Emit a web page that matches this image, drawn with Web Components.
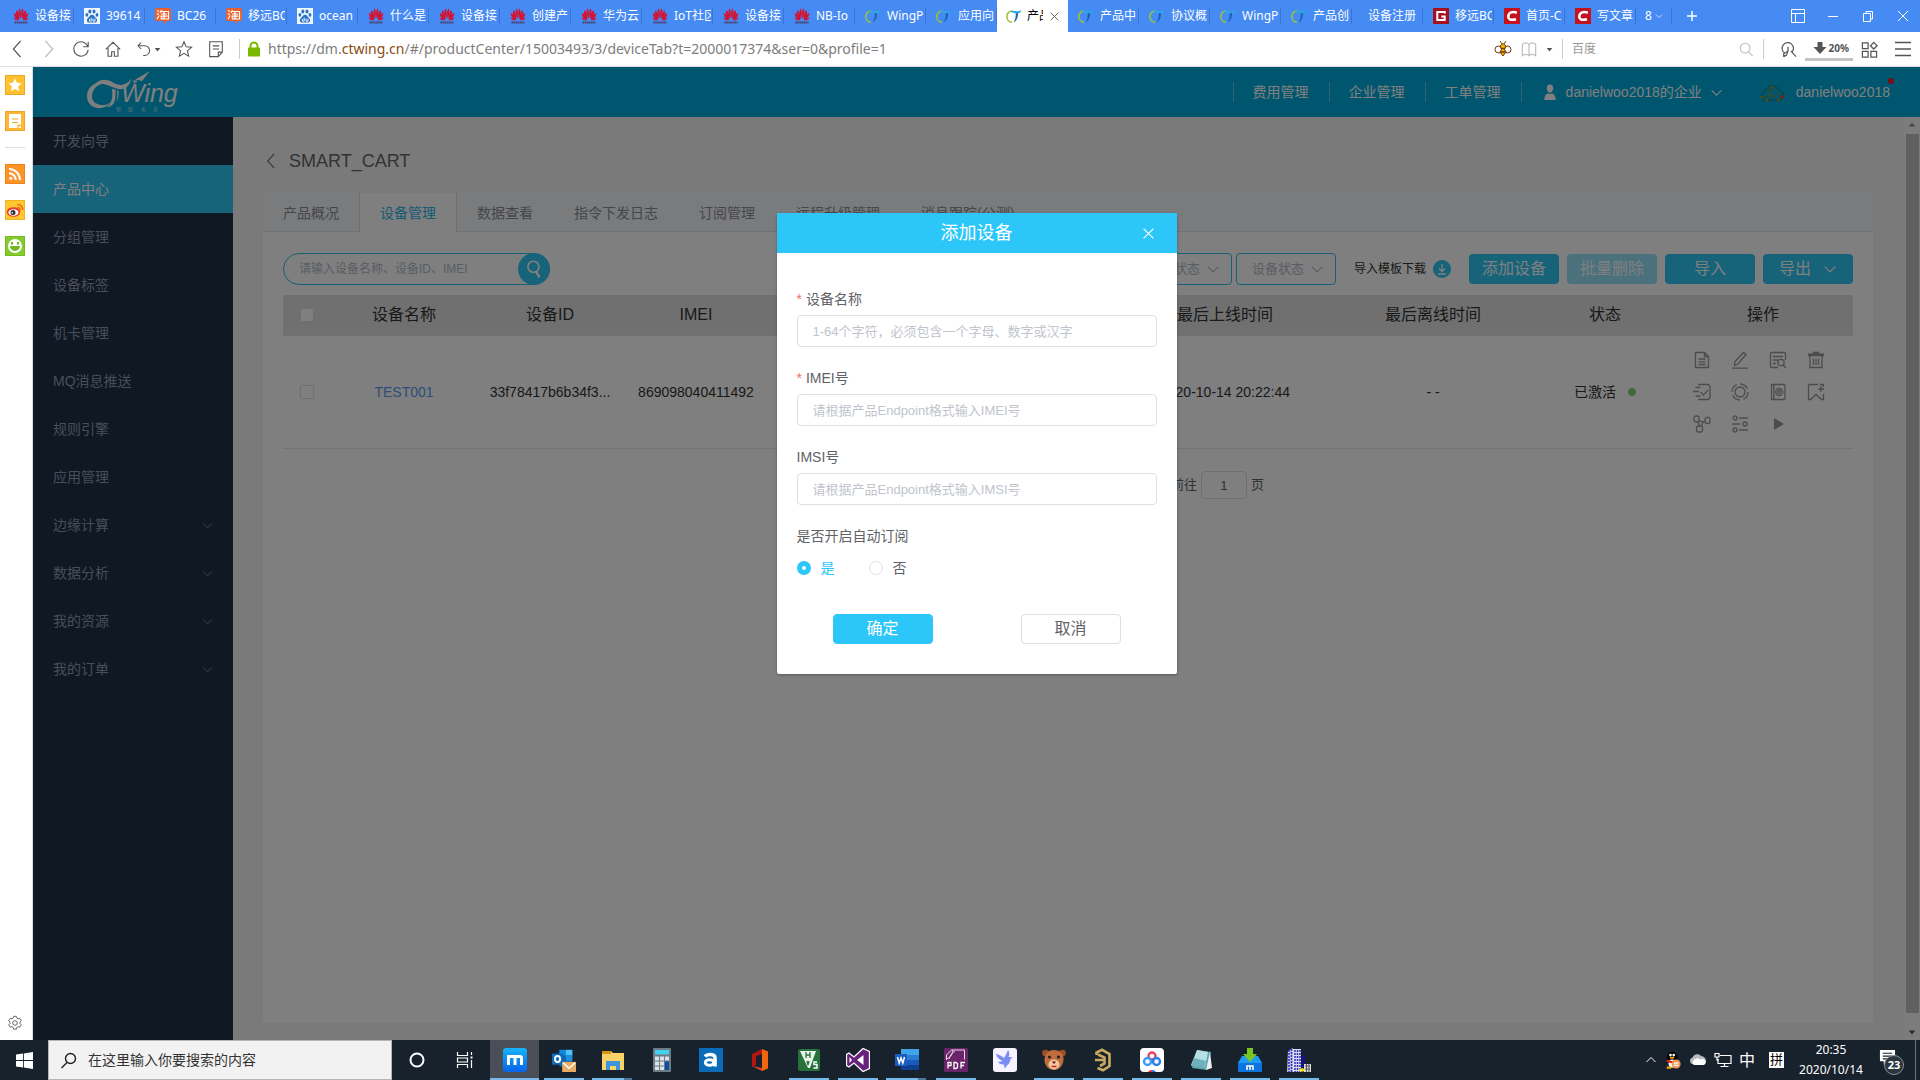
<!DOCTYPE html>
<html lang="zh-CN">
<head>
<meta charset="utf-8">
<title>CTWing - 设备管理</title>
<style>
    html, body {
        height: 100%;
        margin: 0;
    }

    body {
        display: flex;
        flex-direction: column;
        overflow: hidden;
        background: #fff;
        font-family: "Liberation Sans", "Noto Sans CJK SC", sans-serif;
        font-size: 14px;
        line-height: 20px;
        --brand: #2dc6f9;
        --ui-font: "Noto Sans", "Noto Sans CJK SC", sans-serif;
    }
</style>
</head>
<body>
<browser-tabs></browser-tabs>
<browser-toolbar></browser-toolbar>
<browser-body>
    <side-strip slot="strip"></side-strip>
    <site-header></site-header>
    <site-layout>
        <side-nav slot="nav"></side-nav>
        <device-page></device-page>
    </site-layout>
    <modal-dialog slot="overlay" heading="添加设备">
        <device-form></device-form>
    </modal-dialog>
</browser-body>
<task-bar></task-bar>

<script>
const line = (body, box = 24, width = 1) =>
    `<svg viewBox="0 0 ${box} ${box}" fill="none" stroke="currentColor" stroke-width="${width}">${body}</svg>`;

const ICONS = {
    // tab favicons
    huawei: `<svg viewBox="0 0 16 16"><g fill="#d7102c"><path d="M7.600 10.500C5.600 7 5 3 6.200.6 8 1.500 8 6 7.600 10.500zM8.400 10.500C10.400 7 11 3 9.800.6 8 1.500 8 6 8.400 10.500z"/><path d="M6.800 10.700C3.800 8.500 2.200 5.500 3.300 2.200 5.300 3.400 6.500 7 6.800 10.700zM9.200 10.700C12.200 8.500 13.800 5.500 12.700 2.200 10.700 3.400 9.500 7 9.200 10.700z"/><path d="M6.400 11.300C3 10.800.8 8.500.8 5 3.400 5.800 5.600 8.500 6.400 11.300zM9.600 11.300C13 10.800 15.200 8.500 15.200 5 12.600 5.800 10.400 8.500 9.600 11.300z"/><path d="M6.300 11.900C3.500 13 1.500 11.700.5 9.400c2.300.1 4.500 1 5.800 2.500zM9.700 11.900c2.800 1.100 4.800-.2 5.800-2.500-2.300.1-4.500 1-5.800 2.500z"/></g><path d="M1.500 14.500h13" stroke="#4a3355" stroke-width="2" stroke-dasharray="1.300 .7"/></svg>`,
    baidu: `<svg viewBox="0 0 16 16"><rect width="16" height="16" fill="#eef5fb"/><g fill="#2a72c8"><ellipse cx="5.800" cy="3.600" rx="1.500" ry="2"/><ellipse cx="10" cy="3.600" rx="1.500" ry="2"/><ellipse cx="2.900" cy="6.800" rx="1.400" ry="1.900"/><ellipse cx="13" cy="6.800" rx="1.400" ry="1.900"/><path d="M8 6.700c2 0 2.500 2 4 3.200 2 1.800 1 4.600-1 4.600H5c-2 0-3-2.800-1-4.600C5.500 8.700 6 6.700 8 6.700z"/></g><path d="M5.500 11v2.200h1.700V9.700M9 10.500v2.700h2v-2.700" fill="none" stroke="#fff" stroke-width=".9"/></svg>`,
    taobao: `<svg viewBox="0 0 16 16"><path d="M2 0h12a2 2 0 0 1 2 2v9a2 2 0 0 1-2 2h-2l-2.500 3L9 13H2a2 2 0 0 1-2-2V2a2 2 0 0 1 2-2z" fill="#e9602b"/><path d="M2 2.500l2 1M1.800 5.500l2 1M2 11l2.200-3.500M6.500 2L5 5M6 3.500h7.500V11H11M6 6h6M5.500 8.200h7M9 4v6.500M6.300 8.500v2.300h5" fill="none" stroke="#fff" stroke-width="1.200"/></svg>`,
    ctwing: `<svg viewBox="0 0 16 16" fill="none"><path d="M6.500 3C3 3 .8 5.500.8 8.500S3 14 6 14.200" stroke="#9ac43c" stroke-width="1.600"/><path d="M4 3.800C7 1.300 9 4.600 15.600 2.200 14.500 5 12.500 5.600 10.500 5.500 8.500 5 6.500 4.500 4 3.800z" fill="#2ba9e6"/><path d="M12 5.300C12 9 11 13 7.500 14.500 9.500 11.500 9.800 8.500 9.800 5z" fill="#1c62ae"/></svg>`,
    gsite: `<svg viewBox="0 0 16 16"><rect width="16" height="16" fill="#a50f1e"/><path d="M11.800 5.500V4H4.300v8h7.400V8.500H8.300" fill="none" stroke="#fff" stroke-width="2"/></svg>`,
    csdn: `<svg viewBox="0 0 16 16"><rect width="16" height="16" fill="#c5121f"/><path d="M12.800 4.700C8.500 3.300 4.800 4.300 4.300 8c-.4 3.700 3 4.500 7.700 3.300" fill="none" stroke="#fff" stroke-width="2.500"/></svg>`,

    // generic strokes
    close: line('<path d="M5 5l14 14M19 5L5 19"/>', 24, 1.600),
    down: line('<path d="M3 8l9 9 9-9"/>', 24, 2),
    up: line('<path d="M3 16l9-9 9 9"/>', 24, 2),
    plus: line('<path d="M12 2v20M2 12h20"/>', 24, 3),
    layout: line('<path d="M1.500 1.500h13v13h-13zM1.500 5.500h13M5.500 5.500v9"/>', 16),
    minimise: line('<path d="M3 8.500h10"/>', 16),
    restore: line('<path d="M3.500 5.500h7v8h-7zM6 5V3.500h6.500V11H11"/>', 16),
    shut: line('<path d="M3 3l10 10M13 3L3 13"/>', 16),
    back: line('<path d="M14 1L6 10l8 9"/>', 20, 1.400),
    forward: line('<path d="M6 1l8 9-8 9"/>', 20, 1.400),
    reload: line('<path d="M17.500 7A8 8 0 1 0 18 11M18 2v5.500h-5.500"/>', 20, 1.200),
    home: line('<path d="M2 10.500L10 2.500l8 8M4.500 9v9h4v-5h3v5h4V9"/>', 20, 1.200),
    undo: line('<path d="M6.500 2L2.500 6l4 4M3 6h8a5.500 5.500 0 0 1 0 12H9"/>', 20, 1.300),
    star: line('<path d="M10 2l2.400 5.600 6 .5-4.600 4 1.400 5.900L10 14.800 4.800 18l1.400-5.900-4.600-4 6-.5z"/>', 20, 1.200),
    note: line('<path d="M3 2h14v11.500L12.500 18.500H3zM6.500 6.500h7M6.500 10h7M12.500 18v-4.500H17"/>', 20, 1.200),
    caret: `<svg viewBox="0 0 10 10"><path d="M1 3h8L5 8z" fill="currentColor"/></svg>`,
    triUp: `<svg viewBox="0 0 10 10"><path d="M1 7h8L5 2z" fill="currentColor"/></svg>`,
    lock: `<svg viewBox="0 0 16 16"><path d="M4.500 8V5a3.500 3.500 0 0 1 7 0v3" fill="none" stroke="#7ab800" stroke-width="2"/><rect x="2" y="6.500" width="12" height="9" rx="1" fill="#7ab800"/></svg>`,
    bee: `<svg viewBox="0 0 18 18" stroke="#6b3a0c"><path d="M6 1l2 3M12 1l-2 3" fill="none"/><circle cx="4.500" cy="9.500" r="3.500" fill="#fff"/><circle cx="13.500" cy="9.500" r="3.500" fill="#fff"/><path d="M9 3.500l3 2.500-1.500 3.500L12 12l-3 4-3-4 1.500-2.500L6 6z" fill="#f7b500"/><path d="M7 8.500h4M6.500 12h5" stroke-width="1.500"/></svg>`,
    book: line('<path d="M9 4C7 1.500 3.500 1.500 1.500 4v12.500c2-2 5.500-2 7.500 0 2-2 5.500-2 7.500 0V4C14.500 1.500 11 1.500 9 4zM9 4v12"/>', 18, 1.300),
    search: line('<circle cx="8" cy="8" r="5.500"/><path d="M12 12.200l4.500 4.800"/>', 18, 1.200),
    findPage: line('<path d="M5.500 13.500A6 6 0 1 1 14 12.500M12.500 11.500L18 17.500M9.500 7v4.500L5 14.500V18M9.500 11.500L8 16l-3 1.500"/>', 19, 1.300),
    download: `<svg viewBox="0 0 14 14"><path d="M4.500 1h5v5h4L7 13 .5 6h4z" fill="#555"/></svg>`,
    apps: line('<path d="M1.500 2h6v6h-6zM1.500 11h6v6h-6zM10.500 11h6v6h-6zM13.500 1.500L17 5l-3.500 3.500L10 5z"/>', 18, 1.300),
    menu: line('<path d="M1 2.500h16M1 9h16M1 15.500h16"/>', 18, 1.300),

    // left strip
    stripStar: `<svg viewBox="0 0 20 20"><rect x=".5" y=".5" width="19" height="19" fill="#ffc12f" stroke="#eda71d"/><path d="M10 3.500l2 4.300 4.500.5-3.300 3.200.9 4.700-4.100-2.300-4.100 2.300.9-4.700L3.500 8.300l4.500-.5z" fill="#fff"/></svg>`,
    stripNote: `<svg viewBox="0 0 20 20"><rect x=".5" y=".5" width="19" height="19" fill="#ffb632" stroke="#eda02a"/><path d="M4 3h12v10.500h-3.500V17H4z" fill="#fff"/><path d="M16 14.500V17h-3z" fill="#fff"/><path d="M7 8h6M7 11.500h6" stroke="#f5a623" stroke-width="1.200"/></svg>`,
    rss: `<svg viewBox="0 0 20 20"><rect x=".5" y=".5" width="19" height="19" fill="#ff9326" stroke="#ee8420"/><circle cx="5.800" cy="14.300" r="1.600" fill="#fff"/><path d="M4 9.200a6.800 6.800 0 0 1 6.800 6.800M4 5a11 11 0 0 1 11 11" fill="none" stroke="#fff" stroke-width="2"/></svg>`,
    weibo: `<svg viewBox="0 0 20 20"><rect x=".5" y=".5" width="19" height="19" fill="#ffc62f" stroke="#efb327"/><ellipse cx="8.500" cy="12" rx="6.800" ry="4.800" fill="#e6402a"/><ellipse cx="8.500" cy="12.500" rx="5" ry="3.300" fill="#fff"/><circle cx="8" cy="12.500" r="2.500" fill="#333"/><circle cx="7.300" cy="12.800" r=".8" fill="#fff"/><path d="M12.500 7.500a2.500 2.500 0 0 1 2.800 2.800M12.500 4.500a5 5 0 0 1 5.200 5.500" fill="none" stroke="#f0641e" stroke-width="1.400"/></svg>`,
    smile: `<svg viewBox="0 0 20 20"><rect x=".5" y=".5" width="19" height="19" fill="#83cc2b" stroke="#76bb22"/><circle cx="10" cy="10" r="7" fill="#fff"/><path d="M5 10h10a5 5 0 0 1-10 0z" fill="#6fb81f"/><path d="M7 6v2.500M13 6v2.500" stroke="#6fb81f" stroke-width="2"/></svg>`,
    gear: line('<circle cx="9" cy="9" r="2.600"/><path d="M7.500 1.500h3l.6 2 1.400.8 2-.6 1.600 2.600-1.400 1.500v1.800l1.400 1.500-1.600 2.600-2-.6-1.400.8-.6 2h-3l-.6-2-1.400-.8-2 .6-1.600-2.600 1.400-1.500V7.800L1.900 6.300l1.600-2.600 2 .6 1.400-.8z"/>', 18, 1.100),

    // site
    user: `<svg viewBox="0 0 16 20"><path d="M8 0.500c2.600 0 4 2 4 4.600S10.500 11 8 11 4 7.700 4 5.100 5.400.5 8 .5zM.8 20c0-4.500 1.700-6.800 4.700-8.300 1.500 1.200 3.500 1.200 5 0 3 1.500 4.700 3.800 4.700 8.300z" fill="currentColor"/></svg>`,
    network: `<svg viewBox="0 0 26 20" fill="none"><path d="M5 18a5 5 0 0 1 1-9C8 2 17 1 20 7a6 6 0 0 1 2 11z" stroke="#0f8f9c" stroke-width="1.500"/><path d="M3 15l9-2 1-9 6 7 5 3M12 13l-4 5M13 13l7 5M13 5L7 9" stroke="#6d8a3c"/><g fill="#a89a2c"><circle cx="3" cy="15" r="1.400"/><circle cx="12" cy="13" r="1.400"/><circle cx="13" cy="4" r="1.400"/><circle cx="20" cy="18" r="1.400"/><circle cx="8" cy="18" r="1.400"/></g><circle cx="24" cy="14.500" r="2" fill="#e8442e"/></svg>`,
    find: line('<circle cx="8.500" cy="7" r="5"/><path d="M11 11.500l3 5" stroke-width="2.200"/>', 18, 1.500),
    saveDown: line('<path d="M9 4v7M6 8.500l3 3 3-3M5 14h8"/>', 18, 1.300),
    doc: line('<path d="M2.500 1.500h9l4 4v11h-13zM11.500 1.500v4h4M5.500 8h7M5.500 10.800h7M5.500 13.500h7"/>', 18, 1.300),
    edit: line('<path d="M4 10.500L12.500 1.500l2.500 2L7 13l-3.500 1.500zM1 17.200h16"/>', 18, 1.300),
    docFind: line('<path d="M16.500 9V2.500a1 1 0 0 0-1-1h-13a1 1 0 0 0-1 1v13a1 1 0 0 0 1 1H9M4 5.500h10M4 9h5M4 12.500h3"/><circle cx="12" cy="11.500" r="3.200"/><path d="M14.200 14l2.800 3"/>', 18, 1.300),
    trash: line('<path d="M1 4.500h16M2 4V3h14v1M6.500 3V1.500h5V3M3 5v11.500h12V5M6.500 7.500v6.500M9 7.500v6.500M11.500 7.500v6.500"/>', 18, 1.300),
    docCheck: line('<path d="M5 1.500h10.500l1.500 2v11l-1.500 2H5M2.500 4.500h5M0 8.500h6M2.500 13h5M7.500 9l3 3 4.500-5"/>', 18, 1.300),
    ring: line('<circle cx="9" cy="9" r="5"/><circle cx="9" cy="9" r="8" stroke-dasharray="9 3.570"/>', 18, 1.300),
    cert: line('<path d="M2.500 1.500h12a1.500 1.500 0 0 1 1.500 1.500v12a1.500 1.500 0 0 1-1.500 1.500h-12zM4.800 1.500v15"/><circle cx="10.200" cy="9" r="3.500"/><circle cx="10.200" cy="9" r="1.500"/>', 18, 1.300),
    mark: line('<path d="M11 1.500H2.500a1 1 0 0 0-1 1v14h2l5.500-5 5.500 5h2V11M14 3v6M11 6h6M16.500 4V1.500H13"/>', 18, 1.300),
    nodes: line('<rect x="1" y="1" width="5" height="6" rx="2"/><rect x="12" y="2.500" width="5" height="6" rx="2"/><rect x="3.500" y="11" width="6" height="6" rx="2"/><path d="M5 7l1.500 4M6 5c1 2 4 2 6 1.500M8.500 11.500L10 7"/>', 18, 1.300),
    sliders: line('<circle cx="4" cy="3" r="2"/><circle cx="14" cy="9" r="2"/><circle cx="4" cy="15" r="2"/><path d="M8 3h9M1 9h8M8 15h9"/>', 18, 1.300),
    play: `<svg viewBox="0 0 18 18"><path d="M5 3l10 6-10 6z" fill="currentColor"/></svg>`,

    // task bar
    windows: `<svg viewBox="0 0 16 16" fill="#fff"><path d="M0 2.300L6.600 1.400v6.200H0zM7.400 1.300L16 0v7.600H7.400zM0 8.400h6.600v6.200L0 13.700zM7.400 8.400H16V16l-8.600-1.300z"/></svg>`,
    taskSearch: line('<circle cx="10.500" cy="6.500" r="5"/><path d="M7 10.500L1.500 16"/>', 17, 1.400),
    cortana: `<svg viewBox="0 0 24 24"><circle cx="12" cy="12" r="6.500" fill="none" stroke="#fff" stroke-width="2"/></svg>`,
    taskView: `<svg viewBox="0 0 24 24" fill="none" stroke="#fff" stroke-width="1.200"><path d="M3.500 4v3.500h10V4M3.500 20v-3.500h10V20M3.500 10h10v4h-10zM17.500 4v3M17.500 12v8"/><path d="M16.500 9.500h2" stroke-width="2"/></svg>`,
    maxthon: `<svg viewBox="0 0 24 24"><defs><linearGradient id="m" y2="1" x2="0"><stop stop-color="#16b4ff"/><stop offset="1" stop-color="#0763e8"/></linearGradient></defs><rect width="24" height="24" rx="3" fill="url(#m)"/><path d="M5.500 17V8.500H17a1.500 1.500 0 0 1 1.500 1.500v7M12 9v8" fill="none" stroke="#fff" stroke-width="3"/></svg>`,
    outlook: `<svg viewBox="0 0 26 26"><path d="M8 2h14v18H8z" fill="#0a64b4"/><path d="M8 2h7v6H8z" fill="#1487d8"/><path d="M15 2h7v6h-7z" fill="#4fc3f7"/><path d="M15 8h7v6h-7z" fill="#1c8fe0"/><rect y="6" width="12" height="12" fill="#0f6cbd"/><ellipse cx="6" cy="12" rx="2.800" ry="3.300" fill="none" stroke="#fff" stroke-width="2"/><path d="M11 15h15v11H11z" fill="#e8ab63"/><path d="M12 16l6.500 6L25 16" fill="none" stroke="#fff" stroke-width="1.500"/></svg>`,
    explorer: `<svg viewBox="0 0 24 24"><path d="M1 3h9l2 2h11v17H1z" fill="#fbd267"/><path d="M1 3h9v3H1z" fill="#d9930d"/><path d="M5 22v-9h14v9h-4v-4H9v4z" fill="#3c96dc"/></svg>`,
    calc: `<svg viewBox="0 0 24 24"><rect x="3" width="18" height="24" rx="1" fill="#6e7b85"/><rect x="5" y="2" width="14" height="4.500" fill="#45d0f0"/><g fill="#dbe2e8"><path d="M5 8.500h4v4H5zM10 8.500h4v4h-4zM5 13.500h4v4H5zM10 13.500h4v4h-4zM5 18.500h4v3.500H5zM10 18.500h4v3.500h-4zM15 8.500h4v4h-4z"/></g><path d="M15 13.500h4V22h-4z" fill="#0b4f9c"/></svg>`,
    alpha: `<svg viewBox="0 0 24 24"><rect width="24" height="24" fill="#0a6cb8"/><path d="M6 8.500C8 6 16 5 16 10v8.500" fill="none" stroke="#fff" stroke-width="3.600"/><ellipse cx="10.500" cy="14.500" rx="4.200" ry="2.800" fill="none" stroke="#fff" stroke-width="3"/></svg>`,
    office: `<svg viewBox="0 0 24 24"><path d="M4 6l10-5v5L8 8v9l-4 2z" fill="#b3160f"/><path d="M14 1l6 2.500v17L14 23z" fill="#f2660f"/><path d="M4 18l10 2v3z" fill="#ea3e23"/></svg>`,
    green: `<svg viewBox="0 0 24 24"><rect x="1" y="1" width="22" height="22" rx="2" fill="#27713a"/><path d="M3 3h16l-6 17h-2z" fill="#eaf4ea"/><path d="M9 4v6M13 4v6M9 7h4M10 13l1 4 1-4" stroke="#27713a" fill="none" stroke-width="1.300"/><path d="M20 14h-3v2.500h3V20h-3.500" stroke="#fff" stroke-width="1.500" fill="none"/></svg>`,
    vs: `<svg viewBox="0 0 24 24"><path d="M17 .5l6.500 3v17l-6.500 3L8 15l-5 4-2.500-1.500v-11L3 5l5 4z" fill="#68217a" stroke="#fff" stroke-width="1.300"/><path d="M17.500 7v10L11 12zM3.500 9v6L6 12z" fill="#fff"/></svg>`,
    word: `<svg viewBox="0 0 24 24"><path d="M6 1h18v6H6z" fill="#41a5ee"/><path d="M6 7h18v5H6z" fill="#2b7cd3"/><path d="M6 12h18v5H6z" fill="#185abd"/><path d="M6 17h18v5H6z" fill="#103f91"/><rect y="6" width="12" height="12" fill="#1a5dbe"/><path d="M2.500 9l1.700 6L6 10l1.800 5 1.700-6" fill="none" stroke="#fff" stroke-width="1.500"/></svg>`,
    pdf: `<svg viewBox="0 0 24 24"><rect width="24" height="24" rx="1.500" fill="#6a2468"/><path d="M2.500 12V7l5-5h13v9.500M2.500 11c5-2 6-5 6-9M5 11c1-4 4-7 6-8" fill="none" stroke="#eadcea"/><path d="M4 20.500v-6h3v3H4M10 14.500v6h2l1.500-1v-4l-1.500-1zM17 20.500v-6h4M17 17.500h3" fill="none" stroke="#fff" stroke-width="1.300"/></svg>`,
    bird: `<svg viewBox="0 0 24 24"><rect width="24" height="24" rx="3" fill="#f4f3ff"/><path d="M3 6c4 1 6 2 8 4 2-3 3-6 4-8 2 3 1.500 5 .5 7l5 .5c-3 .5-3 2-3.500 4-1 3-4 4-5 7-1-2-1-3-1-4-4 0-5-1-6-3 3 .5 4 0 4-1C5 11 4 9 3 6z" fill="#7b8df0"/></svg>`,
    bear: `<svg viewBox="0 0 24 24"><circle cx="3.500" cy="5" r="3.300" fill="#a04e22"/><circle cx="20.500" cy="5" r="3.300" fill="#a04e22"/><path d="M12 2c6 0 10 4 9.500 10S17 22 12 22 2.500 18 2.500 12 6 2 12 2z" fill="#c06c3c"/><ellipse cx="12" cy="16.500" rx="5.500" ry="5" fill="#f1c69c"/><circle cx="7.500" cy="9" r="1.600" fill="#222"/><circle cx="16.500" cy="9" r="1.600" fill="#222"/><path d="M10 13.500h4L12 16z" fill="#512"/><path d="M9.500 18.500h5" stroke="#c22" stroke-width="1.500"/></svg>`,
    gold: `<svg viewBox="0 0 24 24"><path d="M5.500 7V4.500L11 1.800 18.500 6v12L12 22.300 6.500 20M4 12h9.500v3.500L9 18M7 6.500l6.500 3V12" fill="none" stroke="#c9a962" stroke-width="2.600"/></svg>`,
    netdisk: `<svg viewBox="0 0 24 24"><rect width="24" height="24" rx="4" fill="#fff"/><g fill="none" stroke-width="2.400"><circle cx="12" cy="8" r="3.500" stroke="#e94560"/><circle cx="7.500" cy="13.500" r="3.500" stroke="#3a9bf4"/><circle cx="16.500" cy="13.500" r="3.500" stroke="#2b7fe8"/></g><path d="M8 24a4 3 0 0 1 4-2v2z" fill="#e33"/><path d="M12 22a4 3 0 0 1 4 2h-4z" fill="#27e"/></svg>`,
    notepad: `<svg viewBox="0 0 24 24"><path d="M8 2l14 2-4 18-15-2z" fill="#5fa6b2"/><path d="M8 2l11 2-3 15-14-2z" fill="#b4dfe5"/><path d="M21 4l2 16-6 2z" fill="#e9eef0"/><path d="M5 10l12 3-2 7-13-2z" fill="#6fb0bb"/></svg>`,
    idm: `<svg viewBox="0 0 24 24"><path d="M4 8h16l4 7v7a2 2 0 0 1-2 2H2a2 2 0 0 1-2-2v-7z" fill="#1e9bf5"/><path d="M0 15h24v7a2 2 0 0 1-2 2H2a2 2 0 0 1-2-2z" fill="#0d73de"/><path d="M9 0h6v6h4l-7 8-7-8h4z" fill="#7ac520"/><path d="M9 22v-4h6v4M12 18v4" stroke="#fff" stroke-width="1.500" fill="none"/></svg>`,
    building: `<svg viewBox="0 0 24 24"><path d="M1 3l5-3v24H0z" fill="#c6c9d6"/><path d="M6 1h8v23H6z" fill="#dcdcea"/><path d="M14 8l3-1 2 3v14h-5z" fill="#14186e"/><path d="M2 2v22M4.500 1v23M8 2v22M10.500 2v22M13 2v22" stroke="#2a2ec4" stroke-width="1.500" stroke-dasharray="2 1"/><path d="M17 16h7v8h-7z" fill="#ddd"/><path d="M18 18h5M18 21h5M19.500 16v8M22 16v8" stroke="#555"/><path d="M12 21l4-1 2 3-5 1z" fill="#f4e518"/></svg>`,
    qq: `<svg viewBox="0 0 18 20"><ellipse cx="8" cy="8" rx="6" ry="7.500" fill="#000"/><ellipse cx="8" cy="14" rx="4" ry="4.500" fill="#fff"/><circle cx="6.200" cy="4.500" r="1.500" fill="#fff"/><circle cx="9.800" cy="4.500" r="1.500" fill="#fff"/><ellipse cx="8" cy="7.500" rx="2.600" ry="1.200" fill="#f5a800"/><path d="M2 9.500c4 2 8 2 12 0v2.500c-4 2-8 2-12 0z" fill="#e01e1e"/><path d="M2 18.500h5" stroke="#f5a800" stroke-width="2.500"/><circle cx="12.500" cy="14.500" r="5" fill="#f4985a"/><path d="M10 13.500h5M10 16h5" stroke="#fff" stroke-width="1.200"/></svg>`,
    cloud: `<svg viewBox="0 0 18 18"><path d="M3 13a3.500 3.500 0 0 1 .5-6.500A5 5 0 0 1 12 5a5 5 0 0 1 4 8z" fill="#b9bcc0"/><path d="M5 14a3 3 0 0 1 0-5 4 4 0 0 1 6-.5 3.300 3.300 0 0 1 4 5.500z" fill="#fff"/></svg>`,
    monitor: `<svg viewBox="0 0 18 18" fill="none" stroke="#fff" stroke-width="1.200"><path d="M6 4.500h11v8H4V8M10.500 12.500v3M6.500 15.500h8M1 2.500h4V6H1zM3 6v3h2"/></svg>`,
    message: `<svg viewBox="0 0 18 18"><path d="M1 1h16v12H8l-3 4v-4H1z" fill="#fff"/><path d="M4 4.500h10M4 7.500h10M4 10.500h7" stroke="#18222d" stroke-width="1.200"/></svg>`
};

class UiIcon extends HTMLElement {
    constructor() {
        super();
        this.attachShadow({ mode: 'open' });
    }

    connectedCallback() {
        const size = this.getAttribute('size') || 16;
        this.shadowRoot.innerHTML = `
      <style>
        :host {
          display: inline-flex;
          flex: none;
          width: ${size}px;
          height: ${size}px;
        }

        svg {
          display: block;
          width: 100%;
          height: 100%;
        }
      </style>
      ${ICONS[this.getAttribute('name')]}
    `;
    }
}

customElements.define('ui-icon', UiIcon);

const icon = (name, size = 16) => `<ui-icon name="${name}" size="${size}"></ui-icon>`;

class BrowserTabs extends HTMLElement {
    constructor() {
        super();
        this.attachShadow({ mode: 'open' });
        const tabs = [
            ['huawei', '设备接'], ['baidu', '39614'], ['taobao', 'BC26'], ['taobao', '移远BC'], ['baidu', 'ocean'],
            ['huawei', '什么是'], ['huawei', '设备接'], ['huawei', '创建产'], ['huawei', '华为云'], ['huawei', 'IoT社区'],
            ['huawei', '设备接'], ['huawei', 'NB-Io'], ['ctwing', 'WingP'], ['ctwing', '应用向'], ['ctwing', '产品', true],
            ['ctwing', '产品中'], ['ctwing', '协议概'], ['ctwing', 'WingP'], ['ctwing', '产品创'], ['', '设备注册'],
            ['gsite', '移远BC'], ['csdn', '首页-C'], ['csdn', '写文章']
        ];
        this.shadowRoot.innerHTML = `
      <style>
        :host {
          display: flex;
          flex: none;
          height: 32px;
          padding-left: 3px;
          background: #468af4;
          color: #fff;
          font: 12px/32px var(--ui-font);
        }

        button {
          border: 0;
          padding: 0;
          background: none;
          color: inherit;
          font: inherit;
          display: flex;
          align-items: center;
        }

        .tab {
          box-sizing: border-box;
          width: 71px;
          padding: 0 2px 0 10px;
          gap: 6px;
          background: linear-gradient(#3a74d0, #3a74d0) right 8px / 1px 16px no-repeat;
        }

        .tab.plain {
          padding-left: 16px;
        }

        .tab span {
          flex: 1;
          overflow: hidden;
          white-space: nowrap;
          text-align: left;
        }

        .tab.active {
          gap: 5px;
          background: #fff;
          color: #000;
          padding: 0 7px 0 9px;
        }

        .tab.active ui-icon:last-child {
          color: #555;
        }

        .more {
          width: 36px;
          justify-content: center;
          gap: 3px;
          background: linear-gradient(#3a74d0, #3a74d0) right 8px / 1px 16px no-repeat;
        }

        .add {
          width: 40px;
          justify-content: center;
        }

        .window {
          display: flex;
          margin-left: auto;
        }

        .window button {
          width: 35px;
          justify-content: center;
        }
      </style>
      ${tabs.map(([name, label, active]) => `
      <button class="tab${active ? ' active' : ''}${name ? '' : ' plain'}">
        ${name ? icon(name) : ''}<span>${label}</span>${active ? icon('close', 13) : ''}
      </button>`).join('')}
      <button class="more">8${icon('down', 8)}</button>
      <button class="add" aria-label="新建标签">${icon('plus', 12)}</button>
      <div class="window">
        <button aria-label="布局">${icon('layout')}</button>
        <button aria-label="最小化">${icon('minimise')}</button>
        <button aria-label="还原">${icon('restore')}</button>
        <button aria-label="关闭">${icon('shut')}</button>
      </div>
    `;
    }
}

customElements.define('browser-tabs', BrowserTabs);

class BrowserToolbar extends HTMLElement {
    constructor() {
        super();
        this.attachShadow({ mode: 'open' });
        this.shadowRoot.innerHTML = `
      <style>
        :host {
          display: flex;
          flex: none;
          align-items: center;
          height: 34px;
          padding: 0 8px;
          border-bottom: 1px solid #ddd;
          background: #fff;
          color: #555;
          font: 12px/20px var(--ui-font);
        }

        .tools {
          display: flex;
          align-items: center;
          gap: 14px;
        }

        .undo {
          display: flex;
          align-items: center;
          gap: 2px;
        }

        .pale {
          color: #bbb;
        }

        .bar {
          width: 1px;
          height: 20px;
          background: #ccc;
        }

        .address {
          display: flex;
          flex: 1;
          align-items: center;
          gap: 6px;
          margin-left: 6px;
          color: #7d7d7d;
          font-size: 14px;
        }

        .address b {
          color: #8b4a10;
          font-weight: 400;
        }

        .engine {
          display: flex;
          align-items: center;
          gap: 9px;
        }

        input {
          width: 157px;
          border: 0;
          padding: 0;
          outline: 0;
          font: inherit;
        }

        input::placeholder {
          color: #999;
        }

        .right {
          display: flex;
          align-items: center;
          gap: 8px;
          margin-left: 15px;
        }

        .right ui-icon:last-child {
          margin-left: 8px;
        }

        .load {
          display: flex;
          align-items: center;
          justify-content: space-between;
          box-sizing: border-box;
          width: 48px;
          padding-right: 4px;
          border-bottom: 3px solid #c4c4c4;
          font-size: 10px;
          font-weight: 700;
        }
      </style>
      <div class="tools">
        ${icon('back', 18)}
        <ui-icon class="pale" name="forward" size="18"></ui-icon>
        ${icon('reload', 18)}${icon('home', 18)}
        <span class="undo">${icon('undo', 16)}${icon('caret', 7)}</span>
        ${icon('star', 18)}${icon('note', 18)}
        <span class="bar"></span>
      </div>
      <div class="address">${icon('lock', 16)}<span>https://dm.<b>ctwing.cn</b>/#/productCenter/15003493/3/deviceTab?t=2000017374&amp;ser=0&amp;profile=1</span></div>
      <div class="engine">
        ${icon('bee', 18)}<ui-icon class="pale" name="book" size="16"></ui-icon>${icon('caret', 7)}
        <span class="bar"></span>
        <input placeholder="百度" aria-label="搜索">
        <ui-icon class="pale" name="search" size="16"></ui-icon>
        <span class="bar"></span>
      </div>
      <div class="right">
        ${icon('findPage', 18)}
        <span class="load">${icon('download', 14)}20%</span>
        ${icon('apps', 17)}${icon('menu', 18)}
      </div>
    `;
    }
}

customElements.define('browser-toolbar', BrowserToolbar);

class BrowserBody extends HTMLElement {
    constructor() {
        super();
        this.attachShadow({ mode: 'open' });
        this.shadowRoot.innerHTML = `
      <style>
        :host {
          display: flex;
          flex: 1;
          min-height: 0;
        }

        .page {
          position: relative;
          display: flex;
          flex: 1;
          flex-direction: column;
          min-width: 0;
        }
      </style>
      <slot name="strip"></slot>
      <div class="page">
        <slot></slot>
        <slot name="overlay"></slot>
      </div>
    `;
    }
}

customElements.define('browser-body', BrowserBody);

class SideStrip extends HTMLElement {
    constructor() {
        super();
        this.attachShadow({ mode: 'open' });
        this.shadowRoot.innerHTML = `
      <style>
        :host {
          display: flex;
          flex: none;
          flex-direction: column;
          align-items: center;
          gap: 16px;
          box-sizing: border-box;
          width: 33px;
          padding: 8px 2px 9px 0;
          border-right: 1px solid #ddd;
          background: #fff;
          color: #666;
        }

        hr {
          width: 20px;
          height: 1px;
          margin: 0;
          border: 0;
          background: #ddd;
        }

        ui-icon:last-child {
          margin-top: auto;
        }
      </style>
      ${icon('stripStar', 20)}${icon('stripNote', 20)}
      <hr>
      ${icon('rss', 20)}${icon('weibo', 20)}${icon('smile', 20)}
      ${icon('gear', 16)}
    `;
    }
}

customElements.define('side-strip', SideStrip);

class SiteHeader extends HTMLElement {
    constructor() {
        super();
        this.attachShadow({ mode: 'open' });
        this.shadowRoot.innerHTML = `
      <style>
        :host {
          display: flex;
          flex: none;
          align-items: center;
          height: 50px;
          padding-right: 30px;
          background: #00acdd;
          color: #fff;
        }

        .logo {
          width: 100px;
          height: 50px;
          margin-left: 52px;
        }

        nav {
          display: flex;
          margin-left: auto;
        }

        a {
          color: inherit;
          text-decoration: none;
        }

        nav a {
          padding: 0 20px 0 19px;
          border-left: 1px solid #67cceb;
        }

        .company {
          display: flex;
          align-items: center;
          gap: 8px;
          padding-left: 20px;
          border-left: 1px solid #67cceb;
        }

        .account {
          position: relative;
          display: flex;
          align-items: center;
          gap: 12px;
          margin-left: 36px;
        }

        .account i {
          position: absolute;
          top: -2px;
          right: -4px;
          width: 6px;
          height: 6px;
          border-radius: 50%;
          background: #f01f2f;
        }
      </style>
      <svg class="logo" viewBox="0 0 100 50" fill="#fff" role="img" aria-label="CTWing">
        <path d="M22 16C11 13 2 20 2 29 2 37.500 9 42 16 41c5-.6 8-3 10-6-3 2.500-6 3.500-9 3C10.500 37.500 6.500 34 7 28.500 7.500 21 14 16 22 16z"/>
        <path d="M10 17C15 11.500 22 11.500 28 15.500 34 19.500 41 19 46 12 45 19 40 23 33 22 26 20.500 20 15 10 17z"/>
        <path d="M27 22c1 8 0 14-5 18.500 8-1.500 9-8 8.500-18z"/>
        <path d="M32 23.500c.6 4 .6 8-.6 11.500 2-3 2.600-7 2.100-11.500z"/>
        <path d="M46 15L65 4 57 14l-4-1zM51 12l-3 5 4-2z"/>
        <text x="36" y="35" font-size="25" font-style="italic">Wing</text>
        <text x="31 43 56 68" y="44" font-size="5" opacity=".7">智联未来</text>
      </svg>
      <nav>
        <a href="#fee">费用管理</a>
        <a href="#company">企业管理</a>
        <a href="#order">工单管理</a>
      </nav>
      <a class="company" href="#corp">${icon('user', 16)}danielwoo2018的企业${icon('down', 13)}</a>
      <a class="account" href="#me">${icon('network', 25)}danielwoo2018<i></i></a>
    `;
    }
}

customElements.define('site-header', SiteHeader);

class SiteLayout extends HTMLElement {
    constructor() {
        super();
        this.attachShadow({ mode: 'open' });
        this.shadowRoot.innerHTML = `
      <style>
        :host {
          display: flex;
          flex: 1;
          min-height: 0;
          background: #f5f5f5;
        }

        .scrollbar {
          display: flex;
          flex: none;
          flex-direction: column;
          align-items: center;
          justify-content: space-between;
          gap: 5px;
          width: 16px;
          padding: 4px 0;
          box-sizing: border-box;
          background: #f9f9f9;
          color: #505050;
        }

        .scrollbar ui-icon:first-child {
          color: #8a8a8a;
        }

        .thumb {
          flex: 1;
          width: 13px;
          margin: 0 0 10px;
          background: #c1c1c1;
        }
      </style>
      <slot name="nav"></slot>
      <slot></slot>
      <div class="scrollbar">${icon('triUp', 8)}<div class="thumb"></div>${icon('caret', 8)}</div>
    `;
    }
}

customElements.define('site-layout', SiteLayout);

class SideNav extends HTMLElement {
    constructor() {
        super();
        this.attachShadow({ mode: 'open' });
        const items = ['开发向导', '产品中心', '分组管理', '设备标签', '机卡管理', 'MQ消息推送', '规则引擎', '应用管理'];
        const groups = ['边缘计算', '数据分析', '我的资源', '我的订单'];
        this.shadowRoot.innerHTML = `
      <style>
        :host {
          display: block;
          flex: none;
          width: 200px;
          background: #203048;
        }

        a {
          display: flex;
          align-items: center;
          justify-content: space-between;
          height: 48px;
          padding: 0 20px;
          color: #909caf;
          text-decoration: none;
        }

        a.active {
          background: #2fc6f5;
          color: #fff;
        }

        ui-icon {
          color: #8a94a3;
        }
      </style>
      ${items.map((text, i) => `<a href="#nav${i}"${i === 1 ? ' class="active"' : ''}>${text}</a>`).join('')}
      ${groups.map((text, i) => `<a href="#group${i}">${text}${icon('down', 11)}</a>`).join('')}
    `;
    }
}

customElements.define('side-nav', SideNav);

class DeviceTable extends HTMLElement {
    constructor() {
        super();
        this.attachShadow({ mode: 'open' });
        const actions = ['doc', 'edit', 'docFind', 'trash', 'docCheck', 'ring', 'cert', 'mark', 'nodes', 'sliders', 'play'];
        this.shadowRoot.innerHTML = `
      <style>
        :host {
          display: block;
        }

        table {
          width: 100%;
          table-layout: fixed;
          border-collapse: collapse;
          color: #333;
        }

        th, td {
          padding: 0;
          border-bottom: 1px solid #e4e7ee;
          text-align: center;
          font-weight: 400;
        }

        th {
          height: 40px;
          background: #e0e0e0;
          font-size: 16px;
        }

        td {
          height: 112px;
        }

        td > div {
          padding: 0 10px;
          overflow: hidden;
          white-space: nowrap;
          text-overflow: ellipsis;
        }

        input {
          display: block;
          appearance: none;
          box-sizing: border-box;
          width: 14px;
          height: 14px;
          margin: 0 auto;
          border: 1px solid #dcdfe6;
          border-radius: 2px;
          background: #fff;
        }

        a {
          color: #5a9cf0;
          text-decoration: none;
        }

        td > div.state {
          display: flex;
          align-items: center;
          justify-content: center;
          gap: 12px;
        }

        .state::after {
          content: "";
          width: 8px;
          height: 8px;
          border-radius: 50%;
          background: #78d46c;
        }

        td > div.actions {
          display: grid;
          grid-template-columns: repeat(4, 38px);
          grid-auto-rows: 32px;
          place-items: center;
          color: #999;
        }

        button {
          display: flex;
          padding: 0;
          border: 0;
          background: none;
          color: inherit;
        }
      </style>
      <table>
        <colgroup>
          <col style="width: 48px"><col style="width: 146px"><col style="width: 146px"><col style="width: 146px">
          <col style="width: 146px"><col style="width: 206px"><col style="width: 208px"><col style="width: 208px">
          <col style="width: 136px"><col style="width: 180px">
        </colgroup>
        <thead>
          <tr>
            <th><input type="checkbox" aria-label="全选"></th>
            <th>设备名称</th><th>设备ID</th><th>IMEI</th><th></th><th></th>
            <th>最后上线时间</th><th>最后离线时间</th><th>状态</th><th>操作</th>
          </tr>
        </thead>
        <tbody>
          <tr>
            <td><input type="checkbox" aria-label="选择 TEST001"></td>
            <td><a href="#TEST001">TEST001</a></td>
            <td><div>33f78417b6b34f3...</div></td>
            <td>869098040411492</td>
            <td></td><td></td>
            <td>2020-10-14 20:22:44</td>
            <td>- -</td>
            <td><div class="state">已激活</div></td>
            <td><div class="actions">${actions.map((name) => `<button aria-label="${name}">${icon(name, 18)}</button>`).join('')}</div></td>
          </tr>
        </tbody>
      </table>
    `;
    }
}

customElements.define('device-table', DeviceTable);

class DevicePage extends HTMLElement {
    constructor() {
        super();
        this.attachShadow({ mode: 'open' });
        const tabs = ['产品概况', '设备管理', '数据查看', '指令下发日志', '订阅管理', '远程升级管理', '消息跟踪(公测)'];
        this.shadowRoot.innerHTML = `
      <style>
        :host {
          display: flex;
          flex: 1;
          flex-direction: column;
          min-width: 0;
          padding: 0 31px 17px 30px;
        }

        h1 {
          display: flex;
          align-items: center;
          gap: 10px;
          height: 76px;
          box-sizing: border-box;
          margin: 0;
          padding: 11px 0 0;
          color: #666;
          font-size: 18px;
          font-weight: 400;
        }

        .tabs {
          display: flex;
          height: 38px;
          border-bottom: 1px solid #dfe2ea;
          background: #f5f7fa;
        }

        .tabs button {
          height: 39px;
          margin-left: -1px;
          padding: 0 20px;
          border: 1px solid transparent;
          border-width: 0 1px;
          background: none;
          color: #8a8d93;
          font: inherit;
        }

        .tabs button.active {
          border-color: #dcdfe6;
          background: #fff;
          color: #2fb5e8;
        }

        .panel {
          flex: 1;
          padding: 21px 20px;
          border-radius: 0 0 4px 4px;
          background: #fff;
        }

        .tools {
          display: flex;
          align-items: center;
          height: 32px;
          margin-bottom: 10px;
        }

        .search {
          display: flex;
          box-sizing: border-box;
          width: 267px;
          height: 32px;
          border: 1px solid #2fc0ee;
          border-radius: 16px;
        }

        input {
          box-sizing: border-box;
          min-width: 0;
          border: 0;
          outline: 0;
          background: none;
          font: inherit;
        }

        .search input {
          flex: 1;
          padding: 0 15px;
          font-size: 12px;
        }

        input::placeholder {
          color: #b4bac4;
        }

        .search button {
          display: flex;
          align-items: center;
          justify-content: center;
          width: 32px;
          height: 32px;
          margin: -1px;
          padding: 0;
          border: 0;
          border-radius: 50%;
          background: #2fc6f5;
          color: #fff;
        }

        .filters {
          display: flex;
          gap: 4px;
          margin-left: auto;
        }

        .pick {
          display: grid;
          align-items: center;
          width: 100px;
        }

        .pick > * {
          grid-area: 1 / 1;
        }

        select {
          box-sizing: border-box;
          width: 100%;
          height: 32px;
          padding: 0 15px;
          appearance: none;
          border: 1px solid #2fc0ee;
          border-radius: 4px;
          background: none;
          color: #b4bac4;
          font: inherit;
          font-size: 13px;
        }

        .pick ui-icon {
          justify-self: end;
          margin-right: 12px;
          color: #b4bac4;
        }

        .template {
          display: flex;
          align-items: center;
          gap: 7px;
          margin: 0 18px;
          color: #333;
          font-size: 12px;
          text-decoration: none;
        }

        .template ui-icon {
          border-radius: 50%;
          background: #2fc6f5;
          color: #fff;
        }

        .actions {
          display: flex;
          gap: 8px;
        }

        .actions button {
          display: flex;
          align-items: center;
          justify-content: center;
          gap: 12px;
          width: 90px;
          height: 30px;
          padding: 0;
          border: 0;
          border-radius: 4px;
          background: #2fc6f5;
          color: #fff;
          font: inherit;
          font-size: 16px;
        }

        .actions button:disabled {
          background: #97e2fa;
        }

        .pager {
          display: flex;
          align-items: center;
          justify-content: flex-end;
          gap: 4px;
          width: 392px;
          margin: 22px auto 0;
          color: #606266;
          font-size: 13px;
        }

        .pager input {
          width: 46px;
          height: 28px;
          border: 1px solid #dcdfe6;
          border-radius: 4px;
          color: #606266;
          text-align: center;
        }
      </style>
      <h1>${icon('back', 16)}SMART_CART</h1>
      <div class="tabs">
        ${tabs.map((text, i) => `<button${i === 1 ? ' class="active"' : ''}>${text}</button>`).join('')}
      </div>
      <div class="panel">
        <div class="tools">
          <div class="search">
            <input placeholder="请输入设备名称、设备ID、IMEI" aria-label="搜索设备">
            <button aria-label="搜索">${icon('find', 20)}</button>
          </div>
          <div class="filters">
            <label class="pick"><select aria-label="激活状态"><option>激活状态</option></select>${icon('down', 14)}</label>
            <label class="pick"><select aria-label="设备状态"><option>设备状态</option></select>${icon('down', 14)}</label>
          </div>
          <a class="template" href="#template">导入模板下载${icon('saveDown', 18)}</a>
          <div class="actions">
            <button>添加设备</button>
            <button disabled>批量删除</button>
            <button>导入</button>
            <button>导出${icon('down', 14)}</button>
          </div>
        </div>
        <device-table></device-table>
        <label class="pager">前往<input value="1">页</label>
      </div>
    `;
    }
}

customElements.define('device-page', DevicePage);

class ModalDialog extends HTMLElement {
    constructor() {
        super();
        this.attachShadow({ mode: 'open' });
        this.shadowRoot.innerHTML = `
      <style>
        :host {
          position: absolute;
          inset: 0;
          background: rgba(0, 0, 0, 0.5);
        }

        section {
          width: 400px;
          margin: 146px auto 0;
          border-radius: 2px;
          background: #fff;
          box-shadow: 0 1px 3px rgba(0, 0, 0, 0.3);
        }

        header {
          display: grid;
          align-items: center;
          height: 40px;
          background: var(--brand);
          color: #fff;
        }

        h2, button {
          grid-area: 1 / 1;
          margin: 0;
        }

        h2 {
          font-size: 18px;
          font-weight: 400;
          text-align: center;
        }

        button {
          display: flex;
          justify-self: end;
          margin-right: 20px;
          padding: 0;
          border: 0;
          background: none;
          color: inherit;
        }
      </style>
      <section role="dialog">
        <header>
          <h2></h2>
          <button aria-label="关闭">${icon('close', 17)}</button>
        </header>
        <slot></slot>
      </section>
    `;
    }

    connectedCallback() {
        this.shadowRoot.querySelector('h2').textContent = this.getAttribute('heading');
        this.shadowRoot.querySelector('button').addEventListener('click', () => this.remove());
    }
}

customElements.define('modal-dialog', ModalDialog);

class DeviceForm extends HTMLElement {
    constructor() {
        super();
        this.attachShadow({ mode: 'open' });
        const fields = [
            ['name', '设备名称', '1-64个字符，必须包含一个字母、数字或汉字', true],
            ['imei', 'IMEI号', '请根据产品Endpoint格式输入IMEI号', true],
            ['imsi', 'IMSI号', '请根据产品Endpoint格式输入IMSI号', false]
        ];
        this.shadowRoot.innerHTML = `
      <style>
        :host {
          display: block;
          padding: 34px 20px 30px;
          color: #606266;
        }

        form {
          margin: 0;
        }

        .field {
          display: flex;
          flex-direction: column;
          gap: 4px;
          margin-bottom: 19px;
        }

        .field > label, .title {
          line-height: 24px;
        }

        .required::before {
          content: "*";
          margin-right: 4px;
          color: #f56c6c;
        }

        .field > input {
          box-sizing: border-box;
          height: 32px;
          padding: 0 15px;
          border: 1px solid #dcdfe6;
          border-radius: 4px;
          outline: 0;
          font: inherit;
          font-size: 13px;
        }

        input::placeholder {
          color: #c0c4cc;
        }

        .radios {
          display: flex;
          gap: 34px;
          height: 32px;
        }

        .radios label {
          display: flex;
          align-items: center;
          gap: 10px;
        }

        .radios input {
          appearance: none;
          box-sizing: border-box;
          width: 14px;
          height: 14px;
          margin: 0;
          border: 1px solid #dcdfe6;
          border-radius: 50%;
        }

        .radios input:checked {
          border: 5px solid var(--brand);
        }

        .radios label:has(:checked) {
          color: var(--brand);
        }

        .buttons {
          display: flex;
          justify-content: space-between;
          margin-top: 30px;
          padding: 0 36px;
        }

        .buttons button {
          box-sizing: border-box;
          width: 100px;
          height: 30px;
          padding: 0;
          border: 1px solid #dcdfe6;
          border-radius: 4px;
          background: #fff;
          color: #606266;
          font: inherit;
          font-size: 16px;
        }

        .buttons .primary {
          border-color: var(--brand);
          background: var(--brand);
          color: #fff;
        }
      </style>
      <form>
        ${fields.map(([id, label, hint, required]) => `
        <div class="field">
          <label for="${id}"${required ? ' class="required"' : ''}>${label}</label>
          <input id="${id}" placeholder="${hint}">
        </div>`).join('')}
        <div class="field">
          <span class="title">是否开启自动订阅</span>
          <div class="radios">
            <label><input type="radio" name="sub" checked>是</label>
            <label><input type="radio" name="sub">否</label>
          </div>
        </div>
        <div class="buttons">
          <button type="button" class="primary">确定</button>
          <button type="button">取消</button>
        </div>
      </form>
    `;
    }
}

customElements.define('device-form', DeviceForm);

class TaskBar extends HTMLElement {
    constructor() {
        super();
        this.attachShadow({ mode: 'open' });
        // second value: '' not running, 'run' one window, 'many' stacked windows, 'front' focused
        const apps = [
            ['cortana', ''], ['taskView', ''], ['maxthon', 'front'], ['outlook', 'run'], ['explorer', 'many'], ['calc', ''],
            ['alpha', ''], ['office', ''], ['green', 'run'], ['vs', 'run'], ['word', 'many'], ['pdf', 'run'], ['bird', ''],
            ['bear', 'run'], ['gold', 'run'], ['netdisk', 'run'], ['notepad', 'run'], ['idm', 'run'], ['building', 'run']
        ];
        this.shadowRoot.innerHTML = `
      <style>
        :host {
          display: flex;
          flex: none;
          height: 40px;
          background: #18222d;
          color: #fff;
          font: 12px/20px var(--ui-font);
        }

        button {
          display: flex;
          align-items: center;
          justify-content: center;
          box-sizing: border-box;
          padding: 0;
          border: 0;
          background: none;
          color: inherit;
        }

        .start {
          width: 48px;
        }

        .search {
          display: flex;
          align-items: center;
          gap: 11px;
          box-sizing: border-box;
          width: 344px;
          padding-left: 11px;
          border: 1px solid #b5b5b5;
          background: #f2f2f2;
          color: #222;
        }

        input {
          flex: 1;
          min-width: 0;
          border: 0;
          padding: 0;
          outline: 0;
          background: none;
          font: inherit;
          font-size: 14px;
        }

        input::placeholder {
          color: #333;
        }

        .app {
          width: 49px;
        }

        .run {
          background: linear-gradient(#76b9ed, #76b9ed) center bottom / 40px 2px no-repeat;
        }

        .many {
          background:
            linear-gradient(#76b9ed, #76b9ed) 4px bottom / 32px 2px no-repeat,
            linear-gradient(#4d7799, #4d7799) 36px bottom / 8px 2px no-repeat;
        }

        .front {
          border-bottom: 2px solid #76b9ed;
          padding-top: 2px;
          background: #494e57;
        }

        .tray {
          display: flex;
          align-items: center;
          gap: 7px;
          margin-left: auto;
          border-right: 1px solid #6c747c;
          margin-right: 4px;
        }

        .ime {
          font-size: 16px;
        }

        .pinyin {
          width: 15px;
          height: 16px;
          margin: 0 7px;
          background: #fff;
          color: #000;
          font-size: 13px;
          line-height: 15px;
          text-align: center;
        }

        time {
          width: 66px;
          text-align: center;
        }

        .notice {
          position: relative;
          width: 36px;
          margin-left: 8px;
        }

        .notice b {
          position: absolute;
          top: 6px;
          left: 5px;
          width: 18px;
          height: 18px;
          border: 1px solid #8b9197;
          border-radius: 50%;
          background: #2b3540;
          font-size: 11px;
          line-height: 18px;
          text-align: center;
        }
      </style>
      <button class="start" aria-label="开始">${icon('windows', 17)}</button>
      <label class="search">${icon('taskSearch', 17)}<input placeholder="在这里输入你要搜索的内容"></label>
      ${apps.map(([name, state]) => `<button class="app ${state}" aria-label="${name}">${icon(name, 24)}</button>`).join('')}
      <div class="tray">
        ${icon('up', 12)}${icon('qq', 18)}${icon('cloud', 18)}${icon('monitor', 18)}
        <span class="ime">中</span><span class="pinyin">拼</span>
        <time>20:35<br>2020/10/14</time>
        <span class="notice">${icon('message', 17)}<b>23</b></span>
      </div>
    `;
    }
}

customElements.define('task-bar', TaskBar);
</script>
</body>
</html>
